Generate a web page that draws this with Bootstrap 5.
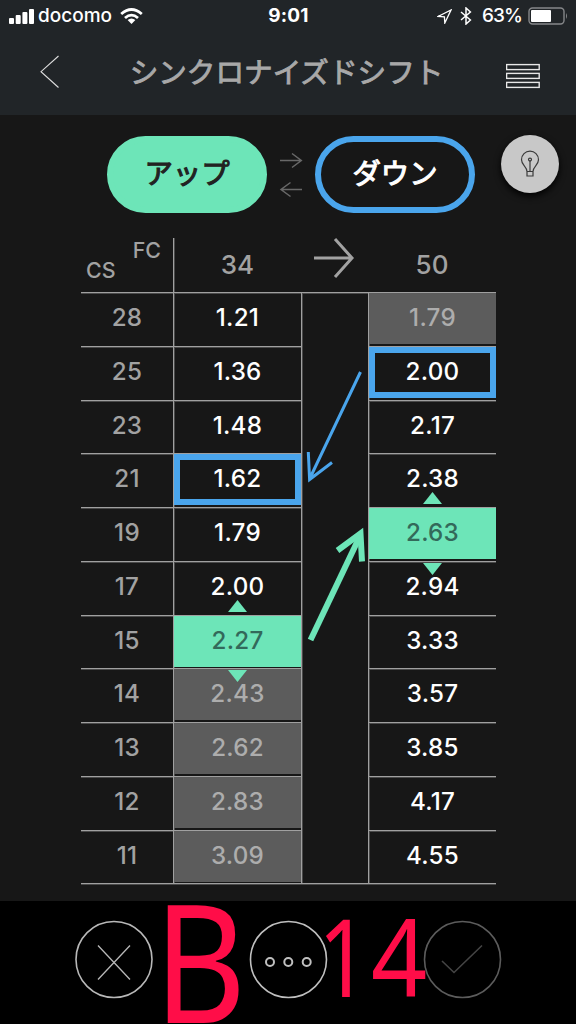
<!DOCTYPE html>
<html lang="ja">
<head>
<meta charset="utf-8">
<meta name="viewport" content="width=device-width, initial-scale=1">
<title>シンクロナイズドシフト</title>
<link href="https://cdn.jsdelivr.net/npm/bootstrap@5.3.0/dist/css/bootstrap.min.css" rel="stylesheet">
<style>
:root{--mint:#6de5b8;--sky:#4aa5ec;--line:#a0a0a0;--soft:#4a4a4a}
body{background:#171717;color:#fff;font-family:Inter,"Noto Sans CJK JP",sans-serif;height:1024px;overflow:hidden}
svg{display:block;flex:none}
.top-area{background:#212528;height:115px}
.status{height:32px;font-size:19px;line-height:32px;font-weight:500;display:grid;grid-template-columns:1fr auto 1fr;padding:0 8px 0 9px}
.status .clock{font-weight:700;letter-spacing:.2px}
.pct{letter-spacing:-.9px}
.title-bar{height:83px;padding:0 36px 0 40px}
.title-bar h1{font-size:28.6px;font-weight:400;-webkit-text-stroke:.9px;color:#a8a8a8;line-height:40px;margin:0 0 2px;padding-left:7px}
.modes{padding:21px 0 0 107px;height:123px}
.pill{width:160px;height:77px;border-radius:39px;border:6px solid var(--mint);font-size:28.4px;font-weight:400;-webkit-text-stroke:1.1px;line-height:1;padding:0;--bs-btn-color:#222;--bs-btn-bg:var(--mint)}
.pill-down{border-color:var(--sky);--bs-btn-color:#fff;--bs-btn-bg:#171717}
.bulb{width:58px;height:58px;background:#c8c8c8;box-shadow:0 3px 7px #000;margin:-1px 0 0 26px}
.ratios{width:415px;margin-left:81px}
.ratio-row{display:grid;grid-template-columns:92px 128px 67px 128px;height:53.75px;font-size:24.2px;letter-spacing:.25px;font-weight:500;line-height:50px;text-align:center}
.ratio-row>div{border-top:1px solid var(--line);box-shadow:inset 0 1px var(--soft);position:relative}
.ratio-row>.vline,.ratio-head>.vline{border-left:1px solid var(--line);background:linear-gradient(var(--soft),var(--soft)) 0 0/1px 100% no-repeat}
.ratio-row .cs{color:#a2a2a2}
.ratio-row:not(.first)>.mid{border-top:0;box-shadow:none}
.ratio-head{display:grid;grid-template-columns:92px 128px 67px 128px;height:54px;color:#a2a2a2;font-size:26px;font-weight:500;text-align:center;line-height:54px}
.ratio-head small{font-size:21.4px;line-height:24px}
.val{height:51px}
.val-off{background:#5c5c5c;color:#adadad}
.val-on{background:var(--mint);color:#33695a}
.val-box{outline:6px solid var(--sky);outline-offset:-6px}
.tri{position:absolute;left:54px;z-index:2}
.tri-up{bottom:3px}.tri-down{top:1px}
.links{position:absolute;left:220px;top:54px;pointer-events:none;z-index:3}
.foot{height:123px;background:#000;padding:20px 75px 0}
.foot svg{overflow:visible}
.note{position:absolute;left:0;top:0;z-index:4}
.note text{font-family:"Noto Sans",sans-serif;fill:#ff0d48}
</style>
</head>
<body class="d-flex flex-column">
<header class="top-area">
  <div class="status">
    <div class="d-flex align-items-center">
      <svg width="25" height="16" viewBox="0 0 25 16" fill="#fff"><rect y="10" width="5" height="6" rx="1"/><rect x="6.7" y="7" width="5" height="9" rx="1"/><rect x="13.4" y="4" width="5" height="12" rx="1"/><rect x="20" y="1" width="5" height="15" rx="1"/></svg>
      <span class="ms-1 carrier">docomo</span>
      <svg class="ms-2" width="23" height="16" viewBox="0 0 23 16"><g fill="none" stroke="#fff" stroke-width="2.8"><path d="M1.2 6Q11.5-3 21.8 6"/><path d="M5 10Q11.5 4.2 18 10"/></g><path d="M7.6 12Q11.5 9 15.4 12L11.5 16Z" fill="#fff"/></svg>
    </div>
    <div class="clock">9:01</div>
    <div class="d-flex align-items-center justify-content-end">
      <svg width="15" height="15" viewBox="0 0 15 15"><path d="M1 7.5 14 1 7.8 14 7.4 7.8Z" fill="none" stroke="#fff" stroke-width="1.3"/></svg>
      <svg width="12" height="18" viewBox="0 0 12 18" style="margin:0 10px 0 8px"><path d="M1 5 10.4 13 6 17V1L10.4 5 1 13" fill="none" stroke="#fff" stroke-width="1.5"/></svg>
      <span class="pct">63%</span>
      <svg width="40" height="18" viewBox="0 0 40 18" style="margin-left:6px"><rect x="1" y="1" width="35" height="16" rx="3.5" fill="none" stroke="#858789" stroke-width="1.4"/><rect x="3" y="3" width="20" height="12" rx="1" fill="#fff"/><path d="M38 6q2 3 0 6z" fill="#858789"/></svg>
    </div>
  </div>
  <div class="title-bar d-flex align-items-center justify-content-between">
    <svg width="20" height="34" viewBox="0 0 20 34" style="margin-top:-4px"><path d="M18.5 1 1 16.7 18.5 32.5" fill="none" stroke="#ddd" stroke-width="1.1"/></svg>
    <h1>シンクロナイズドシフト</h1>
    <svg width="34" height="26" viewBox="0 0 34 26" style="margin-top:4px" fill="none" stroke="#e8e8e8" stroke-width="1.4"><rect x=".6" y="1.6" width="32.6" height="5"/><rect x=".6" y="10.4" width="32.6" height="5"/><rect x=".6" y="19.4" width="32.6" height="5"/></svg>
  </div>
</header>
<section class="modes d-flex align-items-start">
  <button class="btn pill">アップ</button>
  <svg width="48" height="77" viewBox="0 0 48 77" fill="none" stroke="#686868" stroke-width="1.5"><path d="M13 24.5H34M25 17.5 34.3 24.5 25 31.5M35 53.5H14.5M23.5 46.5 14 53.5 23.5 60.5"/></svg>
  <button class="btn pill pill-down">ダウン</button>
  <div class="bulb rounded-circle d-flex align-items-center justify-content-center">
    <svg width="20" height="28" viewBox="0 0 20 28" fill="none" stroke="#3a3a3a" stroke-width="1.2"><path d="M7 21.5C7 16.5 1.5 15 1.5 9.7a8.5 8.5 0 0 1 17 0C18.500 15 13 16.500 13 21.500ZM7 21.500V26H13V21.500M10 10V21.500"/><circle cx="10" cy="9.600" r="1.500"/></svg>
  </div>
</section>
<main class="ratios position-relative">
  <div class="ratio-head">
    <div class="d-flex justify-content-between" style="padding:0 12px 0 5px"><small class="align-self-end" style="margin-bottom:10px">CS</small><small>FC</small></div>
    <div class="vline">34</div>
    <div><svg width="67" height="54" viewBox="0 0 67 54" fill="none" stroke="#a2a2a2" stroke-width="3"><path d="M13 20H51M34 1 51 20 34 39"/></svg></div>
    <div>50</div>
  </div>
  <div id="rows"></div>
  <svg class="links" width="68" height="370" viewBox="301 292 68 370" fill="none">
    <g stroke="#4aa5ec" stroke-width="3"><path d="M360.500 372 310 478M308.300 452 309.600 479.500 332 462.500"/></g>
    <g stroke="#6de5b8" stroke-width="6"><path d="M310.500 640 359.500 537"/><path d="M337.500 550.500 360.500 533.500 362 561.500"/></g>
  </svg>
</main>
<footer class="foot d-flex justify-content-between align-items-start mt-auto position-relative">
  <svg width="78" height="78" viewBox="0 0 78 78" fill="none" stroke="#b8b8b8" stroke-width="1.600"><circle cx="39" cy="38.500" r="38"/><path d="M23 24.500 55 58.500M55 24.500 23 58.500" stroke-width="1.300"/></svg>
  <svg width="78" height="78" viewBox="0 0 78 78" fill="none" stroke="#c0c0c0" stroke-width="1.600"><circle cx="39.500" cy="38.500" r="38"/><g stroke-width="2"><circle cx="21" cy="41" r="4"/><circle cx="39.300" cy="41" r="4"/><circle cx="57.700" cy="41" r="4"/></g></svg>
  <svg width="78" height="78" viewBox="0 0 78 78" fill="none" stroke="#5c5c5c" stroke-width="1.600"><circle cx="39.500" cy="38.500" r="38"/><path d="M19 40 31 51.500 59 24.500" stroke="#444"/></svg>
  <svg class="note" width="576" height="123" viewBox="0 0 576 123">
    <text transform="translate(154 122) scale(.86 1)" font-size="165">B</text>
    <text transform="translate(318 96) scale(.83 1)" font-size="108">1</text>
    <text transform="translate(371 96) scale(.91 1)" font-size="108">4</text>
  </svg>
</footer>
<script src="https://cdn.jsdelivr.net/npm/bootstrap@5.3.0/dist/js/bootstrap.bundle.min.js"></script>
<script>
const data=[[28,'1.21','','1.79','off'],[25,'1.36','','2.00','box'],[23,'1.48','','2.17',''],[21,'1.62','box','2.38','up'],[19,'1.79','','2.63','on'],[17,'2.00','up','2.94','down'],[15,'2.27','on','3.33',''],[14,'2.43','off down','3.57',''],[13,'2.62','off','3.85',''],[12,'2.83','off','4.17',''],[11,'3.09','off','4.55','']];
const tri={up:'<svg class="tri tri-up" width="19" height="12"><path d="M0 12 9.500 0 19 12Z" fill="#6de5b8"/></svg>',down:'<svg class="tri tri-down" width="19" height="12"><path d="M0 0H19L9.500 12Z" fill="#6de5b8"/></svg>'};
const cell=(v,s)=>{const k=s.split(' ').filter(Boolean);return `<div class="vline"><div class="val ${k.map(x=>'val-'+x).join(' ')}">${v}</div>${k.map(x=>tri[x]||'').join('')}</div>`};
document.getElementById('rows').innerHTML=data.map((r,i)=>`<div class="ratio-row ${i?'':'first'}"><div class="cs">${r[0]}</div>${cell(r[1],r[2])}<div class="mid vline"></div>${cell(r[3],r[4])}</div>`).join('')+'<div style="height:2px;background:linear-gradient(#a0a0a0 50%,#4a4a4a 50%)"></div>';
</script>
</body>
</html>
